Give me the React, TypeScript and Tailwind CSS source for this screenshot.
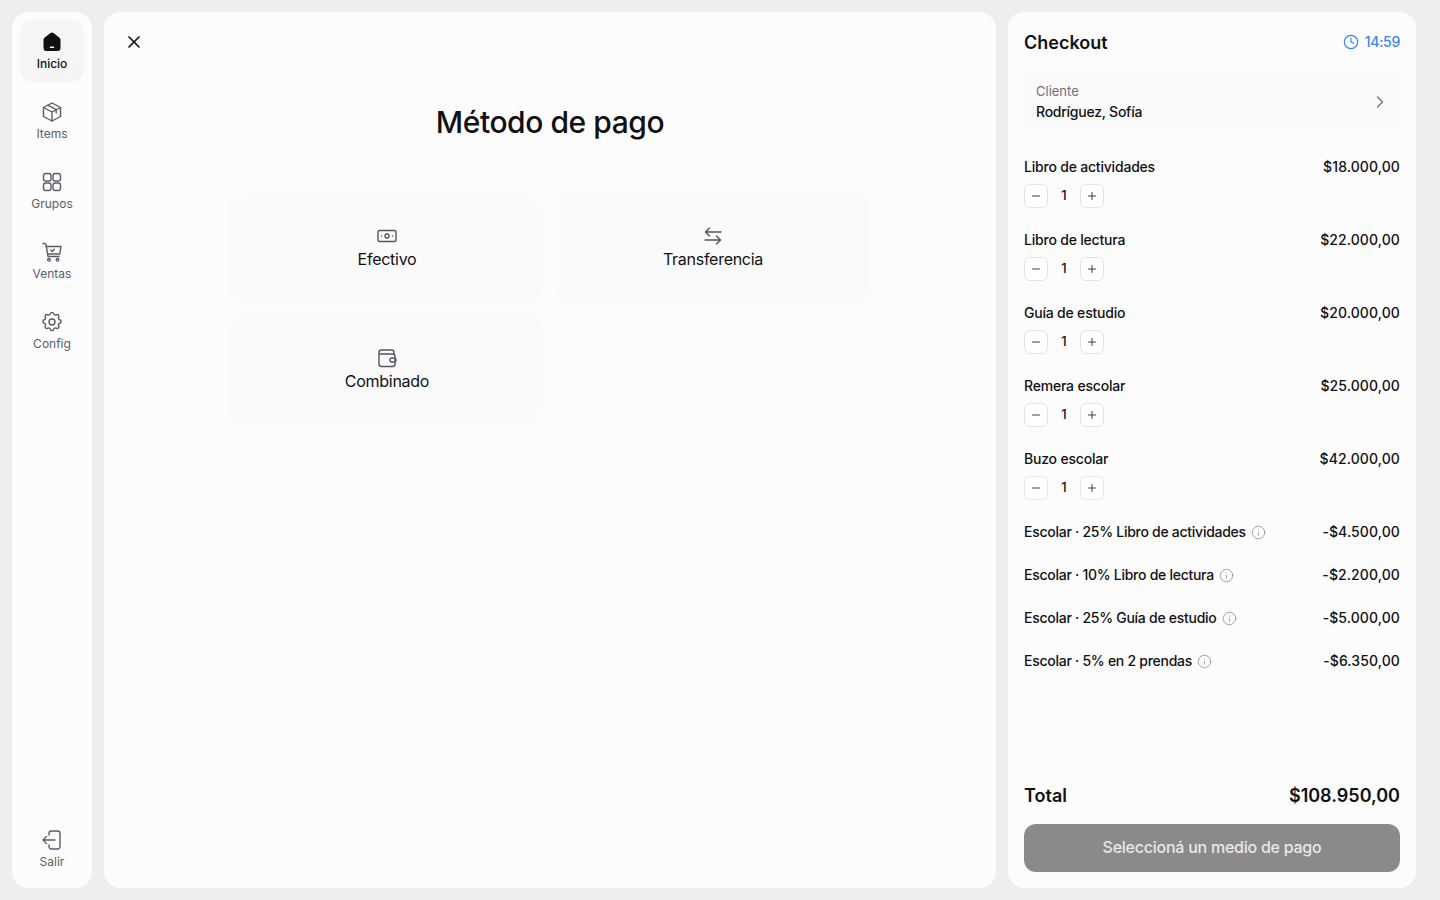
import { ChevronRight, Clock, Info, Minus, Plus, X } from "lucide-react";
import type { ReactNode } from "react";

const stroke = {
  fill: "none",
  stroke: "currentColor",
  strokeWidth: 1.4,
  strokeLinecap: "round" as const,
  strokeLinejoin: "round" as const,
};

function Icon({ children }: { children: ReactNode }) {
  return (
    <svg viewBox="0 0 24 24" className="h-6 w-6" {...stroke}>
      {children}
    </svg>
  );
}

const navItems: { label: string; icon: ReactNode }[] = [
  {
    label: "Items",
    icon: (
      <>
        <path d="M12 3 20.500 7.500v9L12 21l-8.500-4.500v-9z" />
        <path d="M3.500 7.500 12 12l8.500-4.500M12 12v9M7.800 5.200l8.400 4.500v3.300" />
      </>
    ),
  },
  {
    label: "Grupos",
    icon: (
      <>
        <rect x="3.500" y="3.500" width="7.500" height="7.500" rx="2.200" />
        <rect x="13" y="3.500" width="7.500" height="7.500" rx="2.200" />
        <rect x="3.500" y="13" width="7.500" height="7.500" rx="2.200" />
        <rect x="13" y="13" width="7.500" height="7.500" rx="2.200" />
      </>
    ),
  },
  {
    label: "Ventas",
    icon: (
      <>
        <path d="M3 3.500h1.500c.8 0 1.400.5 1.600 1.300L8 16.500h11" />
        <path d="M6.300 6.500H21l-1.300 7.500H7.600" />
        <path d="m11 10.300 1.200 1.200 2.300-2.300" />
        <circle cx="9" cy="19.800" r="1.300" />
        <circle cx="17.500" cy="19.800" r="1.300" />
      </>
    ),
  },
  {
    label: "Config",
    icon: (
      <>
        <path d="M10.300 3.700a1.750 1.750 0 0 1 3.400 0 1.750 1.750 0 0 0 2.600 1.100 1.750 1.750 0 0 1 2.400 2.400 1.750 1.750 0 0 0 1.100 2.600 1.750 1.750 0 0 1 0 3.400 1.750 1.750 0 0 0-1.100 2.600 1.750 1.750 0 0 1-2.400 2.400 1.750 1.750 0 0 0-2.600 1.100 1.750 1.750 0 0 1-3.400 0 1.750 1.750 0 0 0-2.600-1.100 1.750 1.750 0 0 1-2.400-2.400 1.750 1.750 0 0 0-1.100-2.600 1.750 1.750 0 0 1 0-3.400 1.750 1.750 0 0 0 1.100-2.600 1.750 1.750 0 0 1 2.400-2.400 1.750 1.750 0 0 0 2.600-1.100z" />
        <circle cx="12" cy="12" r="3" />
      </>
    ),
  },
];

const cartItems = [
  { name: "Libro de actividades", price: "$18.000,00" },
  { name: "Libro de lectura", price: "$22.000,00" },
  { name: "Guía de estudio", price: "$20.000,00" },
  { name: "Remera escolar", price: "$25.000,00" },
  { name: "Buzo escolar", price: "$42.000,00" },
];

const discounts = [
  { name: "Escolar · 25% Libro de actividades", amount: "-$4.500,00" },
  { name: "Escolar · 10% Libro de lectura", amount: "-$2.200,00" },
  { name: "Escolar · 25% Guía de estudio", amount: "-$5.000,00" },
  { name: "Escolar · 5% en 2 prendas", amount: "-$6.350,00" },
];

function NavItem({ label, icon, active }: { label: string; icon: ReactNode; active?: boolean }) {
  return (
    <button
      className={`flex h-[62px] w-16 flex-col items-center gap-0.5 rounded-xl pt-2.5 text-xs ${
        active ? "bg-[#f5f5f6] font-medium text-[#111113]" : "text-[#5c5c66]"
      }`}
    >
      {icon}
      <span className="leading-4">{label}</span>
    </button>
  );
}

function PayCard({ label, icon }: { label: string; icon: ReactNode }) {
  return (
    <button className="flex h-[111px] flex-col items-center justify-center rounded-2xl bg-[#fafafb] text-base tracking-[-0.27px] text-[#111113]">
      <span className="text-[#55555f]">{icon}</span>
      <span className="-mt-px">{label}</span>
    </button>
  );
}

function QtyButton({ children }: { children: ReactNode }) {
  return (
    <button className="flex h-6 w-6 items-center justify-center rounded-md border border-[#e4e4e7] bg-white text-[#3f3f46]">
      {children}
    </button>
  );
}

export default function App() {
  return (
    <div
      className="flex h-screen gap-3 bg-[#eeeef0] py-3 pr-6 pl-3 text-[#111113]"
      style={{ fontFamily: "Inter, 'Noto Sans', sans-serif" }}
    >
      {/* Sidebar */}
      <nav className="flex w-20 shrink-0 flex-col items-center gap-2 rounded-2xl bg-[#fcfcfd] p-2">
        <NavItem
          active
          label="Inicio"
          icon={
            <svg viewBox="0 0 24 24" className="h-6 w-6">
              <path
                fill="#111113"
                d="M10.500 3.100a2.400 2.400 0 0 1 3 0l5.700 4.500c.8.600 1.300 1.500 1.300 2.500V18a3 3 0 0 1-3 3H6.500a3 3 0 0 1-3-3v-7.900c0-1 .5-1.900 1.300-2.500z"
              />
              <path stroke="#fff" strokeWidth="1.500" strokeLinecap="round" d="M10.500 17.200h3" />
            </svg>
          }
        />
        {navItems.map((item) => (
          <NavItem key={item.label} label={item.label} icon={<Icon>{item.icon}</Icon>} />
        ))}
        <div className="mt-auto">
          <NavItem
            label="Salir"
            icon={
              <Icon>
                <path d="M9 7V5.500A2.500 2.500 0 0 1 11.500 3h6A2.500 2.500 0 0 1 20 5.500v13a2.500 2.500 0 0 1-2.500 2.500h-6A2.500 2.500 0 0 1 9 18.500V17" />
                <path d="M15 12H3m3.500-3.500L3 12l3.500 3.500" />
              </Icon>
            }
          />
        </div>
      </nav>

      {/* Payment method */}
      <main className="flex min-w-0 flex-1 flex-col rounded-2xl bg-[#fcfcfd]">
        <div className="px-5 pt-5">
          <X className="h-5 w-5 text-[#111113]" strokeWidth={2} />
        </div>
        <h1 className="mt-[50px] text-center text-3xl leading-10 font-medium tracking-[-0.43px]">Método de pago</h1>
        <div className="mx-auto mt-[50px] grid w-[640px] grid-cols-2 gap-x-3 gap-y-[11px]">
          <PayCard
            label="Efectivo"
            icon={
              <Icon>
                <rect x="3" y="6.500" width="18" height="11" rx="2" />
                <circle cx="12" cy="12" r="2" />
                <path d="M6.500 12h.01M17.500 12h.01" />
              </Icon>
            }
          />
          <PayCard
            label="Transferencia"
            icon={
              <Icon>
                <path d="M20 8H5m3.500-4L4.500 8l4 4" />
                <path d="M4 16h15m-3.500-4 4 4-4 4" />
              </Icon>
            }
          />
          <PayCard
            label="Combinado"
            icon={
              <Icon>
                <path d="M19 8V6.500A2.500 2.500 0 0 0 16.500 4H6.500A2.500 2.500 0 0 0 4 6.500V18a2.500 2.500 0 0 0 2.500 2.500h11A2.500 2.500 0 0 0 20 18v-7.500A2.500 2.500 0 0 0 17.500 8H4" />
                <rect x="15" y="12" width="6" height="4" rx="2" />
              </Icon>
            }
          />
        </div>
      </main>

      {/* Checkout */}
      <aside className="flex w-[408px] shrink-0 flex-col rounded-2xl bg-[#fcfcfd] p-4">
        <div className="flex h-7 items-center justify-between">
          <h2 className="pt-0.5 text-lg font-semibold">Checkout</h2>
          <div className="flex items-center gap-1.5 text-sm font-medium tracking-[-0.3px] text-[#3b82f6]">
            <Clock className="h-4 w-4" strokeWidth={1.75} />
            14:59
          </div>
        </div>
        <div className="-mx-1 mt-4 flex h-[60px] items-center justify-between rounded-xl bg-[#fafafb] pr-3.5 pl-4">
          <div className="pb-0.5">
            <div className="text-[13px] leading-5 text-[#71717a]">Cliente</div>
            <div className="mt-px text-sm leading-5 font-medium tracking-[-0.25px]">Rodríguez, Sofía</div>
          </div>
          <ChevronRight className="h-5 w-5 text-[#71717a]" strokeWidth={1.5} />
        </div>

        <div className="mt-[25px] flex flex-col gap-[22px]">
          {cartItems.map((item) => (
            <div key={item.name}>
              <div className="flex justify-between text-sm leading-5 font-medium">
                <span className="tracking-[-0.2px]">{item.name}</span>
                <span className="tracking-[0.1px]">{item.price}</span>
              </div>
              <div className="mt-[7px] flex items-center">
                <QtyButton>
                  <Minus className="h-3 w-3" strokeWidth={2} />
                </QtyButton>
                <span className="w-8 text-center text-[13px] font-medium">1</span>
                <QtyButton>
                  <Plus className="h-3 w-3" strokeWidth={2} />
                </QtyButton>
              </div>
            </div>
          ))}
        </div>

        <div className="mt-[22px] flex flex-col gap-[23px]">
          {discounts.map((d) => (
            <div key={d.name} className="flex justify-between text-sm leading-5 font-medium">
              <span className="flex items-center gap-[5px] tracking-[-0.27px]">
                {d.name}
                <Info className="h-[15px] w-[15px] text-[#8b8b94]" strokeWidth={1.25} />
              </span>
              <span className="tracking-[0.1px]">{d.amount}</span>
            </div>
          ))}
        </div>

        <div className="mt-auto flex items-center justify-between text-lg leading-7 font-semibold">
          <span>Total</span>
          <span>$108.950,00</span>
        </div>
        <button className="mt-[14px] h-12 rounded-xl bg-[#8a8a8a] pb-0.5 text-base font-medium tracking-[-0.25px] text-white/80">
          Seleccioná un medio de pago
        </button>
      </aside>
    </div>
  );
}
